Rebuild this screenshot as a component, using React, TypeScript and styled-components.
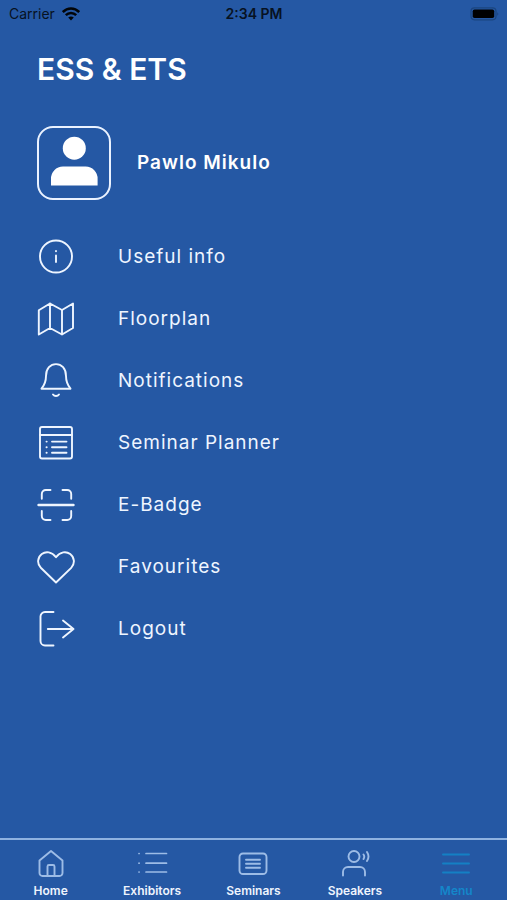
import React from "react";
import styled, { createGlobalStyle } from "styled-components";

const GlobalStyle = createGlobalStyle`
  *, *::before, *::after { box-sizing: border-box; }
  body {
    margin: 0;
    background: #2558a4;
    font-family: Inter, "Liberation Sans", sans-serif;
  }
`;

const Screen = styled.div`
  display: flex;
  flex-direction: column;
  min-height: 100vh;
  background: #2558a4;
  color: #fff;
`;

const StatusBar = styled.div`
  display: grid;
  grid-template-columns: 1fr auto 1fr;
  align-items: center;
  height: 28px;
  padding: 0 8px 0 9px;
  color: #071222;
  font-size: 14px;
  line-height: 20px;
`;

const Carrier = styled.div`
  display: flex;
  align-items: center;
  gap: 7px;
`;

const Clock = styled.time`
  font-weight: 600;
`;

const BatterySlot = styled.div`
  display: flex;
  justify-content: flex-end;
`;

const Main = styled.main`
  flex: 1;
  padding: 21px 37px 0;
`;

const Title = styled.h1`
  margin: 0;
  font-size: 30px;
  line-height: 40px;
  font-weight: 600;
`;

const Profile = styled.section`
  display: flex;
  align-items: center;
  gap: 26px;
  margin-top: 37px;
`;

const Avatar = styled.div`
  width: 74px;
  height: 74px;
  border: 2px solid #eaf2ff;
  border-radius: 16px;
`;

const Name = styled.h2`
  margin: 0;
  font-size: 19px;
  line-height: 24px;
  font-weight: 600;
  letter-spacing: 1px;
`;

const MenuList = styled.ul`
  list-style: none;
  margin: 26px 0 0;
  padding: 0;
`;

const MenuLink = styled.a`
  display: flex;
  align-items: center;
  gap: 43px;
  height: 62px;
  color: #eef5ff;
  font-size: 19px;
  line-height: 24px;
  letter-spacing: 1px;
  text-decoration: none;
`;

const Icon = styled.svg`
  display: block;
  flex: none;
  fill: none;
  stroke: currentColor;
  stroke-width: 1.9;
  stroke-linecap: round;
  stroke-linejoin: round;
`;

const TabBar = styled.nav`
  display: grid;
  grid-template-columns: repeat(5, 1fr);
  height: 62px;
  border-top: 2px solid #8fb2e0;
`;

const Tab = styled.a<{ $active?: boolean }>`
  display: flex;
  flex-direction: column;
  align-items: center;
  padding-top: 8px;
  gap: 3px;
  color: ${(p) => (p.$active ? "#1487ca" : "#eef4fd")};
  font-size: 12px;
  line-height: 16px;
  font-weight: 600;
  text-decoration: none;

  svg {
    color: ${(p) => (p.$active ? "#1480c4" : "#9dbce6")};
  }
`;

const menuItems = [
  {
    label: "Useful info",
    icon: (
      <>
        <circle cx="19" cy="18.5" r="16" />
        <path d="M19 17.5v6.5M19 13v.2" />
      </>
    ),
  },
  {
    label: "Floorplan",
    icon: (
      <path d="M1.8 10.2 13 3.500l12 6.500L36 3.500v24.500L25 34.500l-12-6.500-11.200 6.500ZM13 3.500v24.500M25 10v24.500" />
    ),
  },
  {
    label: "Notifications",
    icon: (
      <path d="M4.5 26.7C8 22.500 9 19.500 9 14 9 6.500 13.500 2.100 19 2.100S29 6.500 29 14c0 5.500 1 8.500 4.500 12.700ZM16 32.500c1.500 2 4.500 2 6 0" />
    ),
  },
  {
    label: "Seminar Planner",
    icon: (
      <>
        <rect x="3" y="3" width="32" height="31.500" rx="2" />
        <path d="M3 11h32M15 17.600h14.500M15 23.300h14.500M15 28.800h14.500M9.500 17.600h.2M9.500 23.300h.2M9.500 28.800h.2" />
      </>
    ),
  },
  {
    label: "E-Badge",
    icon: (
      <>
        <path d="M4.800 12.800V8a4 4 0 0 1 4-4H13.500M25.500 4h4.700a4 4 0 0 1 4 4v4.800M34.200 25v5a4 4 0 0 1-4 4h-4.700M13.500 34H8.800a4 4 0 0 1-4-4v-5" />
        <path d="M1.500 19h35" strokeWidth="2.400" />
      </>
    ),
  },
  {
    label: "Favourites",
    icon: (
      <path d="M19 34.500 3.800 19.800C-.5 15.500.8 9 4.800 6c4-3 10-2.500 14.200 3.300C23.200 3.500 29.200 3 33.200 6c4 3 5.300 9.500 1 13.800Z" />
    ),
  },
  {
    label: "Logout",
    icon: (
      <path d="M16.500 2H8a4.500 4.500 0 0 0-4.500 4.500v24.500A4.500 4.500 0 0 0 8 35.500h8.500M10.800 19h25.700M26 10.500l10.500 8.500L26 27.500" />
    ),
  },
];

const tabs = [
  {
    label: "Home",
    icon: (
      <>
        <path d="M4.500 12.500 16 3l11.500 9.500v12.500a3 3 0 0 1-3 3h-17a3 3 0 0 1-3-3Z" />
        <path d="M12.500 28V18.500a1.500 1.500 0 0 1 1.500-1.500h4a1.500 1.500 0 0 1 1.500 1.500V28" />
      </>
    ),
  },
  {
    label: "Exhibitors",
    icon: (
      <path d="M10 5.500h20.500M10 15.200h20.500M10 24h20.500M3 5.500h.1M3 15.200h.1M3 24h.1" strokeWidth="1.700" />
    ),
  },
  {
    label: "Seminars",
    icon: (
      <>
        <rect x="2.500" y="5.500" width="27" height="20.500" rx="3.500" />
        <path d="M9 11.800h14M9 15.800h14M9 19.800h14" />
      </>
    ),
  },
  {
    label: "Speakers",
    icon: (
      <>
        <circle cx="15" cy="8.500" r="5.500" />
        <path d="M4 27.500V24a5 5 0 0 1 5-5h12a5 5 0 0 1 5 5v3.500M24.500 6.500q1.500 2 0 4.500M28 4q3 4.500 0 9" />
      </>
    ),
  },
  {
    label: "Menu",
    active: true,
    icon: <path d="M3 6.500h26M3 15.500h26M3 24.500h26" />,
  },
];

export default function App() {
  return (
    <>
      <GlobalStyle />
      <Screen>
        <StatusBar>
          <Carrier>
            Carrier
            <svg width="18" height="14" viewBox="0 0 18 14" fill="none" stroke="#020508" strokeWidth="2.500" aria-label="Wi-Fi">
              <path d="M.8 5c4.700-4.700 11.700-4.700 16.400 0M3.800 8.200c3-3 7.400-3 10.400 0" />
              <path d="M6.200 10.500c1.700-1.500 3.900-1.500 5.600 0L9 13.500Z" fill="#020508" stroke="none" />
            </svg>
          </Carrier>
          <Clock>2:34 PM</Clock>
          <BatterySlot>
            <svg width="29" height="14" viewBox="0 0 29 14" aria-label="Battery">
              <rect x="1" y=".8" width="25" height="12" rx="3.500" fill="none" stroke="#1b457f" strokeWidth="1.200" />
              <rect x="2.700" y="2.500" width="21.500" height="8.600" rx="1.800" fill="#000" />
              <path d="M27.500 5q1.500 2 0 4Z" fill="#163a70" />
            </svg>
          </BatterySlot>
        </StatusBar>
        <Main>
          <Title>ESS &amp; ETS</Title>
          <Profile>
            <Avatar>
              <svg width="70" height="70" viewBox="0 0 70 70" fill="#fff" aria-hidden="true">
                <circle cx="35.300" cy="20.200" r="11.500" />
                <path d="M12 57.500V51a12 12 0 0 1 12-12.500h22.600a12 12 0 0 1 12 12.500v6.500Z" />
              </svg>
            </Avatar>
            <Name>Pawlo Mikulo</Name>
          </Profile>
          <nav aria-label="Main menu">
            <MenuList>
              {menuItems.map((item) => (
                <li key={item.label}>
                  <MenuLink href="#">
                    <Icon width="38" height="38" viewBox="0 0 38 38" aria-hidden="true">
                      {item.icon}
                    </Icon>
                    {item.label}
                  </MenuLink>
                </li>
              ))}
            </MenuList>
          </nav>
        </Main>
        <TabBar aria-label="Tabs">
          {tabs.map((tab) => (
            <Tab key={tab.label} href="#" $active={tab.active} aria-current={tab.active ? "page" : undefined}>
              <Icon width="32" height="32" viewBox="0 0 32 32" aria-hidden="true">
                {tab.icon}
              </Icon>
              {tab.label}
            </Tab>
          ))}
        </TabBar>
      </Screen>
    </>
  );
}
